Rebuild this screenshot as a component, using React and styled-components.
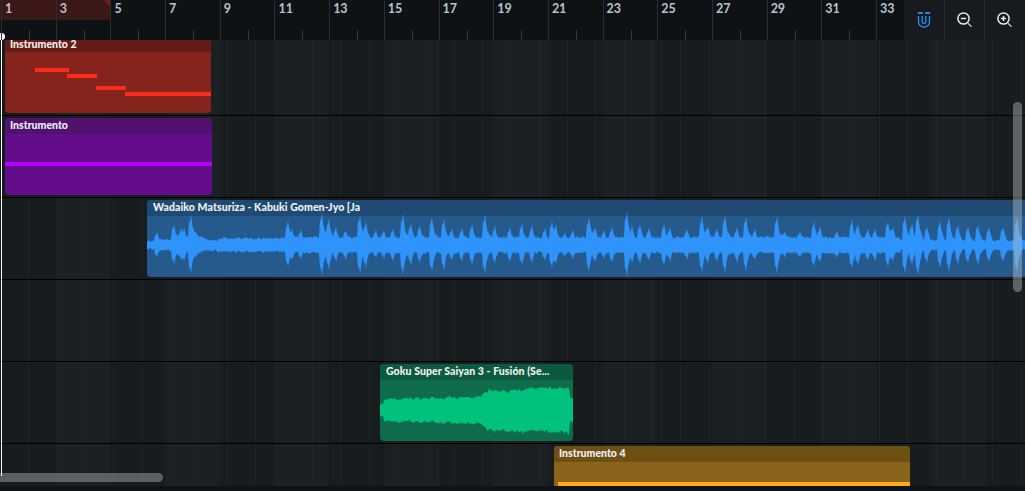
import React from "react";
import styled, { createGlobalStyle } from "styled-components";

const Global = createGlobalStyle`
  html, body { margin: 0; padding: 0; background: #0f1316; overflow: hidden; }
  * { box-sizing: border-box; }
`;

const Frame = styled.div`
  position: relative;
  width: 1025px;
  height: 491px;
  overflow: hidden;
  display: flex;
  flex-direction: column;
  background: #0f1316;
  font-family: "Lato", "Noto Sans", sans-serif;
`;

const Header = styled.div`
  display: flex;
  height: 40px;
  flex: none;
`;

const Ruler = styled.div`
  position: relative;
  flex: 1;
  min-width: 0;
  display: flex;
  padding-left: 1px;
  overflow: hidden;
  background: #0e1215;
`;

const LoopRegion = styled.div`
  position: absolute;
  left: 0;
  top: 0;
  width: 111px;
  height: 20px;
  background: linear-gradient(225deg, #6a2020 0, #6a2020 5px, #3b1716 5px);
`;

const Bar = styled.div`
  position: relative;
  z-index: 1;
  flex: 0 0 54.7px;
  border-left: 1px solid #2a2e32;
  padding: 1px 0 0 3px;
  font-size: 12.5px;
  font-weight: 700;
  line-height: 16px;
  color: #b9c3cc;
  &::after {
    content: "";
    position: absolute;
    left: 27px;
    top: 30px;
    width: 1px;
    height: 10px;
    background: #34383b;
  }
`;

const Tools = styled.div`
  flex: 0 0 121px;
  display: flex;
  background: #171b1e;
`;

const ToolButton = styled.div`
  flex: 1;
  display: flex;
  align-items: center;
  justify-content: center;
  & + & { border-left: 1px solid #2a2e32; }
`;

const Tracks = styled.div`
  flex: none;
  height: 446px;
  overflow: hidden;
  background-color: #1a2023;
  background-position: 1px 0;
  background-image:
    repeating-linear-gradient(90deg, transparent 0, transparent 27.35px, rgba(255,255,255,0.028) 27.35px, rgba(255,255,255,0.028) 28.35px),
    repeating-linear-gradient(90deg, #171c1e 0, #171c1e 54.7px, #1a2023 54.7px, #1a2023 109.4px);
`;

const Track = styled.div`
  height: ${(p) => p.$h}px;
  padding-top: ${(p) => p.$pad}px;
  border-bottom: ${(p) => (p.$line ? "1px solid #000" : "none")};
  overflow: hidden;
`;

const Clip = styled.div`
  position: relative;
  margin-left: ${(p) => p.$left}px;
  width: ${(p) => p.$width}px;
  height: ${(p) => p.$height || 77}px;
  border-radius: ${(p) => p.$radius || "4px"};
  background: ${(p) => p.$body};
  overflow: hidden;
`;

const ClipHeader = styled.div`
  height: ${(p) => p.$h || 16}px;
  padding-left: ${(p) => p.$inset || 5}px;
  background: ${(p) => p.$bg};
  color: #f1f1f1;
  font-size: 10.5px;
  font-weight: 900;
  letter-spacing: ${(p) => p.$track || 0}px;
  line-height: ${(p) => p.$lh || 15}px;
  white-space: nowrap;
`;

const Note = styled.div`
  position: absolute;
  height: 4px;
  background: ${(p) => p.$color};
  left: ${(p) => p.$x}px;
  top: ${(p) => p.$y}px;
  width: ${(p) => p.$w}px;
`;

const Wave = styled.svg`
  position: absolute;
  left: 0;
  top: 0;
  display: block;
`;

const HThumb = styled.div`
  position: absolute;
  left: 0;
  top: 473px;
  width: 163px;
  height: 9px;
  border-radius: 0 5px 5px 0;
  background: rgba(150,152,152,0.55);
`;

const VThumb = styled.div`
  position: absolute;
  left: 1013px;
  top: 102px;
  width: 9px;
  height: 190px;
  border-radius: 5px;
  background: rgba(190,195,200,0.42);
`;

const Playhead = styled.div`
  position: absolute;
  left: 1px;
  top: 36px;
  width: 1px;
  height: 440px;
  background: #fff;
  &::before {
    content: "";
    position: absolute;
    left: -3px;
    top: -3px;
    width: 7px;
    height: 7px;
    border-radius: 50%;
    background: #fff;
  }
`;

const rng = (seed) => {
  let s = seed;
  return () => {
    s = (s * 16807) % 2147483647;
    return s / 2147483647;
  };
};

const blueSpikes = [
  [157,10],[174,17],[181,13],[184,14],[191,26],[288,20],[292,14],[301,12],[322,28],[329,22],[336,15],[346,12],
  [360,26],[366,20],[376,12],[384,12],[393,14],[403,26],[411,18],[420,16],[432,24],[444,22],[452,14],[462,14],
  [472,18],[485,26],[495,16],[510,14],[522,18],[532,16],[545,13],[552,20],[556,17],[565,10],[573,12],[589,24],
  [595,15],[604,12],[612,15],[627,29],[632,16],[640,17],[649,14],[664,18],[670,14],[687,13],[702,25],[708,16],
  [717,14],[725,25],[737,15],[746,24],[755,13],[777,25],[785,11],[800,11],[814,20],[820,15],[837,11],[852,21],
  [858,18],[868,13],[875,13],[888,20],[893,15],[905,25],[912,18],[918,27],[927,15],[940,20],[949,24],[958,17],
  [968,16],[978,17],[989,14],[1003,15],[1017,24],
];

const wavePath = (w, cy, ampAt) => {
  const top = [];
  const bottom = [];
  for (let i = 0; i <= w; i++) {
    const [a, b] = ampAt(i);
    top.push(`${i} ${(cy - a).toFixed(1)}`);
    bottom.unshift(`${i} ${(cy + b).toFixed(1)}`);
  }
  return `M${top.join("L")}L${bottom.join("L")}Z`;
};

const bluePath = (() => {
  const r = rng(4711);
  return wavePath(880, 45, (i) => {
    const x = i + 147;
    const base = x < 157 ? 2.5 : x < 218 ? 4 : x < 288 ? 5.5 : x > 900 ? 3.5 : 6.5;
    let tip = 0;
    let body = 0;
    for (const [sx, amp] of blueSpikes) {
      const d = x - sx;
      if (d >= -2) {
        const t = d < 0 ? 0.75 : 1;
        const dd = Math.max(d, 0);
        tip = Math.max(tip, t * amp * 1.14 * Math.exp(-dd / 3));
        const slow = x < 225 ? 11 : x > 900 ? 4 : 7;
        body = Math.max(body, t * amp * 0.66 * Math.exp(-dd / slow));
      }
    }
    const env = Math.max(base, tip, body);
    const up = env + r() * 2.4;
    const down = Math.max(base, tip * 0.95, body * 0.9) + r() * 2.4;
    return [up, down];
  });
})();

const greenPath = (() => {
  const r = rng(9091);
  let slow = 0;
  return wavePath(193, 46, (i) => {
    let env;
    if (i < 4) env = 4.5;
    else if (i < 100) env = 9 + (i / 100) * 2.5;
    else if (i < 108) env = 11.5 + (i - 100) * 0.8;
    else env = 17.5 + ((i - 108) / 85) * 3;
    if (i > 189) env = 10;
    slow = slow * 0.6 + (r() - 0.5) * 2.2;
    const tall = i > 108 && r() > 0.86 ? 2.5 : 0;
    return [env + 1 + slow + r() * 1.4 + tall, env + 1 - slow + r() * 1.6 + (i > 108 && r() > 0.88 ? 2.5 : 0)];
  });
})();

const IconBase = styled.svg`
  display: block;
  fill: none;
  stroke: ${(p) => p.$color};
  stroke-width: ${(p) => p.$sw || 1.5};
  stroke-linecap: round;
`;

const Magnet = () => (
  <IconBase $color="#2a86e6" $sw={1.4} width="16" height="16" viewBox="0 0 16 16">
    <path d="M1.8 1h5M9.2 1h5" strokeWidth="2" strokeLinecap="butt" />
    <path d="M2.5 4v5.7a5.5 5.5 0 0 0 11 0V4M6.2 4v5.7a1.8 1.8 0 0 0 3.6 0V4" strokeLinecap="butt" />
  </IconBase>
);

const Zoom = ({ plus }) => (
  <IconBase $color="#e8eaeb" width="18" height="18" viewBox="0 0 18 18">
    <circle cx="7.5" cy="7.5" r="5.6" />
    <path d="M5.5 7.5h4" />
    {plus && <path d="M7.5 5.5v4" />}
    <path d="M12.4 12.6 15 15.2" strokeWidth="1.3" stroke="#cfd2d4" />
  </IconBase>
);

const labels = [1, 3, 5, 7, 9, 11, 13, 15, 17, 19, 21, 23, 25, 27, 29, 31, 33];

export default function App() {
  return (
    <Frame>
      <Global />
      <Header>
        <Ruler>
          <LoopRegion />
          {labels.map((n) => (
            <Bar key={n}>{n}</Bar>
          ))}
        </Ruler>
        <Tools>
          <ToolButton><Magnet /></ToolButton>
          <ToolButton><Zoom /></ToolButton>
          <ToolButton><Zoom plus /></ToolButton>
        </Tools>
      </Header>
      <Tracks>
        <Track $h={76} $pad={0} $line>
          <Clip $left={5} $width={206} $height={73} $radius="0 0 4px 4px" $body="#85241c">
            <ClipHeader $bg="#651c14" $h={12} $lh={8}>Instrumento 2</ClipHeader>
            <Note $color="#f92d18" $x={30} $y={28} $w={34} />
            <Note $color="#f92d18" $x={62} $y={34} $w={30} />
            <Note $color="#f92d18" $x={91} $y={46} $w={30} />
            <Note $color="#f92d18" $x={120} $y={52} $w={86} />
          </Clip>
        </Track>
        <Track $h={82} $pad={2} $line>
          <Clip $left={5} $width={207} $body="#640d8a">
            <ClipHeader $bg="#50116f">Instrumento</ClipHeader>
            <Note $color="#b400ff" $x={0} $y={44} $w={207} />
          </Clip>
        </Track>
        <Track $h={82} $pad={2} $line>
          <Clip $left={147} $width={900} $radius="4px 0 0 4px" $body="#265a8c">
            <ClipHeader $bg="#1e4a73" $inset={6} $track={0.08}>Wadaiko Matsuriza - Kabuki Gomen-Jyo [Ja</ClipHeader>
            <Wave width="880" height="77" viewBox="0 0 880 77"><path d={bluePath} fill="#2e93fa" /></Wave>
          </Clip>
        </Track>
        <Track $h={82} $pad={2} $line />
        <Track $h={82} $pad={2} $line>
          <Clip $left={380} $width={193} $body="#0e6b4b">
            <ClipHeader $bg="#0b5a40" $inset={6} $track={0.08}>Goku Super Saiyan 3 - Fusión (Se...</ClipHeader>
            <Wave width="193" height="77" viewBox="0 0 193 77"><path d={greenPath} fill="#00c27c" /></Wave>
          </Clip>
        </Track>
        <Track $h={42} $pad={2}>
          <Clip $left={554} $width={356} $height={40} $radius="4px 4px 0 0" $body="#8a641b">
            <ClipHeader $bg="#6e5015">Instrumento 4</ClipHeader>
            <Note $color="#ffa91a" $x={4} $y={36} $w={352} />
          </Clip>
        </Track>
      </Tracks>
      <HThumb />
      <VThumb />
      <Playhead />
    </Frame>
  );
}
